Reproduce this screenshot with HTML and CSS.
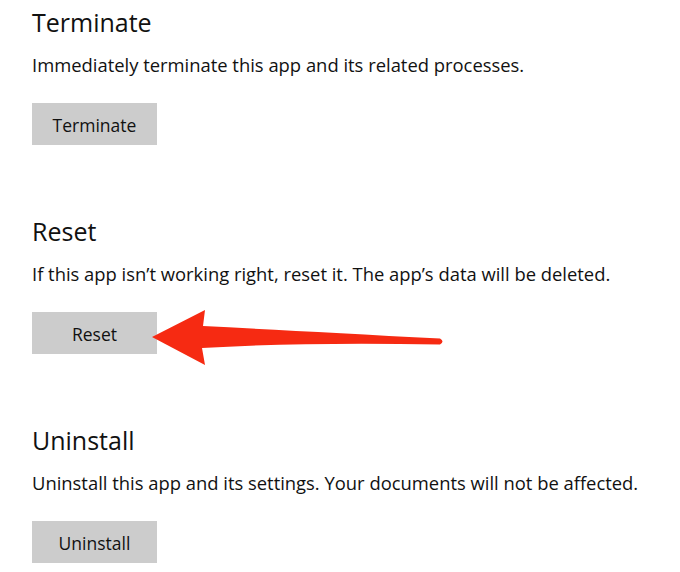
FILE: index.html
```html
<!DOCTYPE html>
<html lang="en">
<head>
<meta charset="utf-8">
<title>App options</title>
<link rel="stylesheet" href="styles.css">
</head>
<body>
<main class="page">
  <section class="section">
    <h2 class="title">Terminate</h2>
    <p class="desc">Immediately terminate this app and its related processes.</p>
    <button class="btn" type="button">Terminate</button>
  </section>
  <section class="section">
    <h2 class="title">Reset</h2>
    <p class="desc">If this app isn’t working right, reset it. The app’s data will be deleted.</p>
    <button class="btn" type="button">Reset</button>
  </section>
  <section class="section">
    <h2 class="title">Uninstall</h2>
    <p class="desc">Uninstall this app and its settings. Your documents will not be affected.</p>
    <button class="btn" type="button">Uninstall</button>
  </section>
  <svg class="arrow" width="680" height="572" viewBox="0 0 680 572" aria-hidden="true">
    <path d="M152,337 L205,310 L203,326 Q300,331 440,338.5 Q445,341.5 440,344.5 Q300,342 202,348 L205,365 Z" fill="#f62a12"/>
  </svg>
</main>
</body>
</html>
```

FILE: styles.css
```css
html, body {
  margin: 0;
  padding: 0;
  background: #ffffff;
}

.page {
  position: relative;
  width: 680px;
  height: 572px;
  overflow: hidden;
  padding: 7px 0 0 32px;
  box-sizing: border-box;
  font-family: "Open Sans", "Noto Sans", "Liberation Sans", sans-serif;
  color: #111111;
}

.section {
  display: flex;
  flex-direction: column;
  align-items: flex-start;
  margin-bottom: 71px;
}

.title {
  margin: 0;
  font-size: 25px;
  line-height: 30px;
  font-weight: 400;
  color: #111111;
}

.desc {
  margin: 16px 0 0 0;
  font-size: 18.4px;
  line-height: 24px;
  font-weight: 400;
  white-space: nowrap;
}

.btn {
  margin-top: 26px;
  width: 125px;
  height: 42px;
  padding: 2px 0 0 0;
  box-sizing: border-box;
  border: none;
  border-radius: 0;
  background: #cccccc;
  color: #111111;
  font-family: inherit;
  font-size: 17.5px;
  line-height: 40px;
  text-align: center;
}

.arrow {
  position: absolute;
  left: 0;
  top: 0;
}
```
